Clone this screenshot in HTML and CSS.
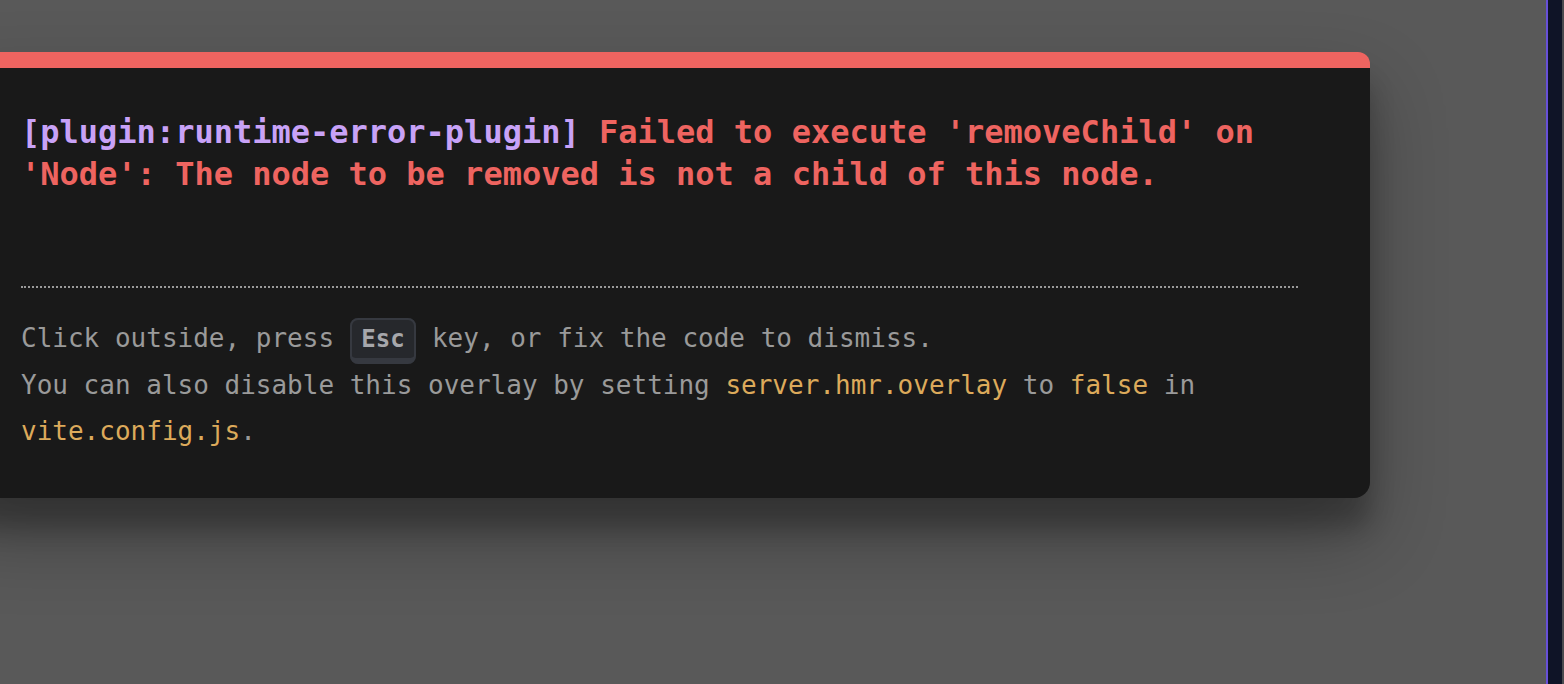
FILE: index.html
```html
<!DOCTYPE html>
<html lang="en">
<head>
<meta charset="utf-8">
<title>Error overlay</title>
<link rel="stylesheet" href="styles.css">
</head>
<body>
<div class="screen">
  <div class="backdrop">
    <div class="window">
      <pre class="message"><span class="plugin">[plugin:runtime-error-plugin]</span> <span class="message-body">Failed to execute 'removeChild' on 'Node': The node to be removed is not a child of this node.</span></pre>
      <div class="tip">Click outside, press <kbd>Esc</kbd> key, or fix the code to dismiss.<br>You can also disable this overlay by setting <code>server.hmr.overlay</code> to <code>false</code> in <code>vite.config.js</code>.</div>
    </div>
  </div>
  <div class="edge">
    <div class="edge-line"></div>
    <div class="edge-panel"></div>
    <div class="edge-rim"></div>
  </div>
</div>
</body>
</html>
```

FILE: styles.css
```css
html, body {
  margin: 0;
  padding: 0;
  height: 100%;
  overflow: hidden;
  background: #595959;
}

.screen {
  display: flex;
  height: 684px;
  width: 1564px;
  overflow: hidden;
}

.backdrop {
  flex: 1 1 auto;
  min-width: 0;
  background: #595959;
  padding-top: 52px;
}

.window {
  font-family: "DejaVu Sans Mono", "Liberation Mono", monospace;
  line-height: 1.5;
  color: #d8d8d8;
  box-sizing: border-box;
  width: 1420px;
  margin-left: -50px;
  padding: 44px 72px 43px 71px;
  background: #191919;
  border-radius: 12px 12px 16px 16px;
  border-top: 16px solid #ee6460;
  box-shadow: 0 38px 76px rgba(0, 0, 0, 0.30), 0 30px 24px rgba(0, 0, 0, 0.22);
}

.message {
  font-family: "DejaVu Sans Mono", "Liberation Mono", monospace;
  font-size: 32px;
  line-height: 1.3;
  font-weight: 700;
  white-space: pre-wrap;
  margin: 0 0 91px 0;
}

.plugin {
  color: #c8a2f7;
}

.message-body {
  color: #ee6460;
}

.tip {
  font-size: 26px;
  color: #9a9a9a;
  border-top: 2px dotted #9a9a9a;
  padding-top: 27px;
  line-height: 46.5px;
}

kbd {
  line-height: 1.5;
  font-family: "DejaVu Sans Mono", "Liberation Mono", monospace;
  font-size: 24px;
  font-weight: 700;
  background-color: rgb(38, 40, 44);
  color: rgb(166, 167, 171);
  padding: 4.8px 9.6px;
  border-radius: 8px;
  border-width: 2px 2px 6px;
  border-style: solid;
  border-color: rgb(54, 57, 64);
}

code {
  font-size: 26px;
  font-family: "DejaVu Sans Mono", "Liberation Mono", monospace;
  color: #dcaa5b;
}

.edge {
  flex: 0 0 18px;
  display: flex;
}

.edge-line {
  width: 2px;
  background: #6750d9;
}

.edge-panel {
  flex: 1;
  background: #0f1427;
}

.edge-rim {
  width: 2px;
  background: #4a4a4f;
}
```
